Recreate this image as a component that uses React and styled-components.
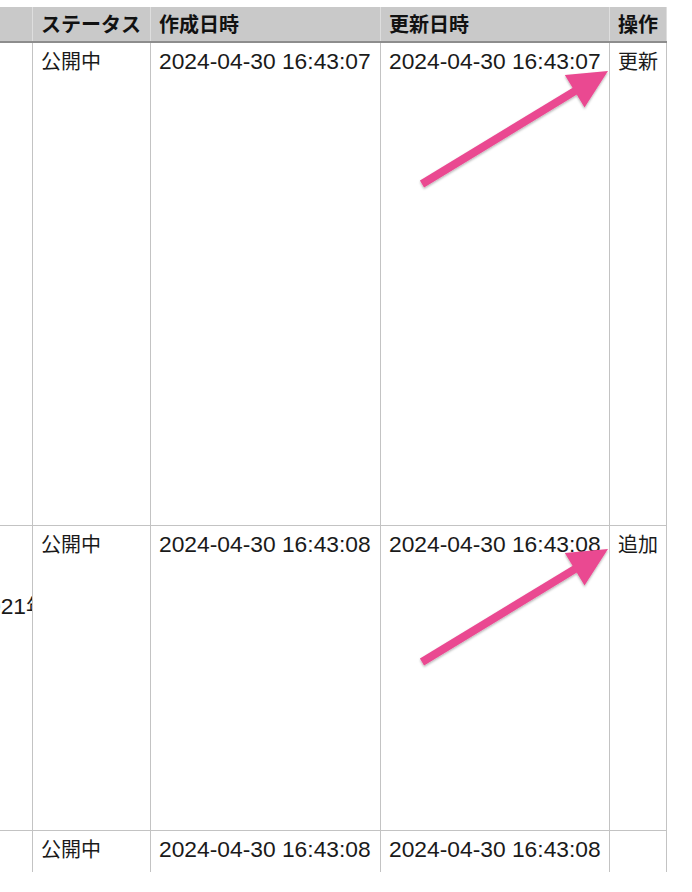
import React from "react";
import styled, { createGlobalStyle } from "styled-components";

const GlobalStyle = createGlobalStyle`
  html, body { margin: 0; padding: 0; background: #ffffff; }
  body {
    font-family: "Liberation Sans", "Noto Sans CJK JP", sans-serif;
    color: #1c1c1c;
  }
`;

const COLS = "32px 118px 230px 229px 58px";

const Page = styled.div`
  position: relative;
  width: 692px;
  height: 892px;
  padding-top: 7px;
  box-sizing: border-box;
  overflow: hidden;
`;

const Viewport = styled.div`
  width: 667px;
  height: 865px;
  overflow: hidden;
`;

const Row = styled.div`
  display: grid;
  grid-template-columns: ${COLS};
  height: ${(p) => p.$h}px;
  box-sizing: border-box;
  border-bottom: ${(p) => (p.$last ? "none" : "1px solid #c3c3c3")};

  & > * + * {
    border-left: 1px solid #c3c3c3;
  }
  & > *:last-child {
    border-right: 1px solid #c3c3c3;
  }
`;

const HeadRow = styled(Row)`
  background: #c9c9c9;
  border-bottom: 2px solid #8d8d8d;

  & > * + * {
    border-left: 1px solid #dedede;
  }
  & > *:last-child {
    border-right: 1px solid #dedede;
  }
`;

const HeadCell = styled.div`
  box-sizing: border-box;
  padding: 0 8px;
  font-family: "Noto Sans CJK JP", sans-serif;
  font-weight: 700;
  font-size: 20px;
  line-height: 34px;
  color: #111;
  white-space: nowrap;
  overflow: hidden;
`;

const Cell = styled.div`
  box-sizing: border-box;
  padding: ${(p) => (p.$date ? "4px 8px 0" : "4px 8px 0")};
  font-family: ${(p) =>
    p.$date ? '"Liberation Sans", sans-serif' : '"Noto Sans CJK JP", sans-serif'};
  font-size: ${(p) => (p.$date ? "22.8px" : "20px")};
  line-height: 28px;
  color: #1a1a1a;
  white-space: nowrap;
  overflow: hidden;
`;

const ClipCell = styled.div`
  box-sizing: border-box;
  overflow: hidden;
  display: flex;
  justify-content: flex-end;
  align-items: flex-start;
  padding-top: ${(p) => p.$top || 0}px;
`;

const ClipText = styled.span`
  white-space: nowrap;
  margin-right: -14px;
  line-height: 28px;
  color: #1a1a1a;
`;

const Digits = styled.span`
  font-family: "Liberation Sans", sans-serif;
  font-size: 22.8px;
`;

const Kanji = styled.span`
  font-family: "Noto Sans CJK JP", sans-serif;
  font-size: 20px;
`;

const Overlay = styled.svg`
  position: absolute;
  left: 0;
  top: 0;
  width: 692px;
  height: 892px;
  pointer-events: none;
`;

const ARROW = "#ea4a91";

function Arrow({ x1, y1, x2, y2 }) {
  const dx = x2 - x1;
  const dy = y2 - y1;
  const len = Math.hypot(dx, dy);
  const ux = dx / len;
  const uy = dy / len;
  const nx = -uy;
  const ny = ux;
  const headLen = 39;
  const half = 19;
  const bx = x2 - ux * headLen;
  const by = y2 - uy * headLen;
  const pts = [
    [x2, y2],
    [bx + nx * half, by + ny * half],
    [bx - nx * half, by - ny * half],
  ]
    .map((p) => p.join(","))
    .join(" ");
  return (
    <g filter="url(#shadow)">
      <line
        x1={x1}
        y1={y1}
        x2={bx + ux * 4}
        y2={by + uy * 4}
        stroke={ARROW}
        strokeWidth="8"
        strokeLinecap="butt"
      />
      <polygon points={pts} fill={ARROW} />
    </g>
  );
}

const rows = [
  {
    h: 483,
    status: "公開中",
    created: "2024-04-30 16:43:07",
    updated: "2024-04-30 16:43:07",
    op: "更新",
  },
  {
    h: 305,
    status: "公開中",
    created: "2024-04-30 16:43:08",
    updated: "2024-04-30 16:43:08",
    op: "追加",
    clip: true,
  },
  {
    h: 120,
    status: "公開中",
    created: "2024-04-30 16:43:08",
    updated: "2024-04-30 16:43:08",
    op: "",
    last: true,
  },
];

export default function App() {
  return (
    <>
      <GlobalStyle />
      <Page>
        <Viewport>
          <HeadRow $h={36}>
            <HeadCell />
            <HeadCell>ステータス</HeadCell>
            <HeadCell>作成日時</HeadCell>
            <HeadCell>更新日時</HeadCell>
            <HeadCell>操作</HeadCell>
          </HeadRow>
          {rows.map((r, i) => (
            <Row key={i} $h={r.h} $last={r.last}>
              {r.clip ? (
                <ClipCell $top={66}>
                  <ClipText>
                    <Digits>2021</Digits>
                    <Kanji>年</Kanji>
                  </ClipText>
                </ClipCell>
              ) : (
                <ClipCell />
              )}
              <Cell>{r.status}</Cell>
              <Cell $date>{r.created}</Cell>
              <Cell $date>{r.updated}</Cell>
              <Cell>{r.op}</Cell>
            </Row>
          ))}
        </Viewport>
        <Overlay viewBox="0 0 692 892">
          <defs>
            <filter id="shadow" x="-20%" y="-20%" width="140%" height="140%">
              <feDropShadow dx="0" dy="1.5" stdDeviation="1.2" floodColor="#000" floodOpacity="0.3" />
            </filter>
          </defs>
          <Arrow x1={422} y1={184} x2={608} y2={71} />
          <Arrow x1={422} y1={662} x2={608} y2={549} />
        </Overlay>
      </Page>
    </>
  );
}
